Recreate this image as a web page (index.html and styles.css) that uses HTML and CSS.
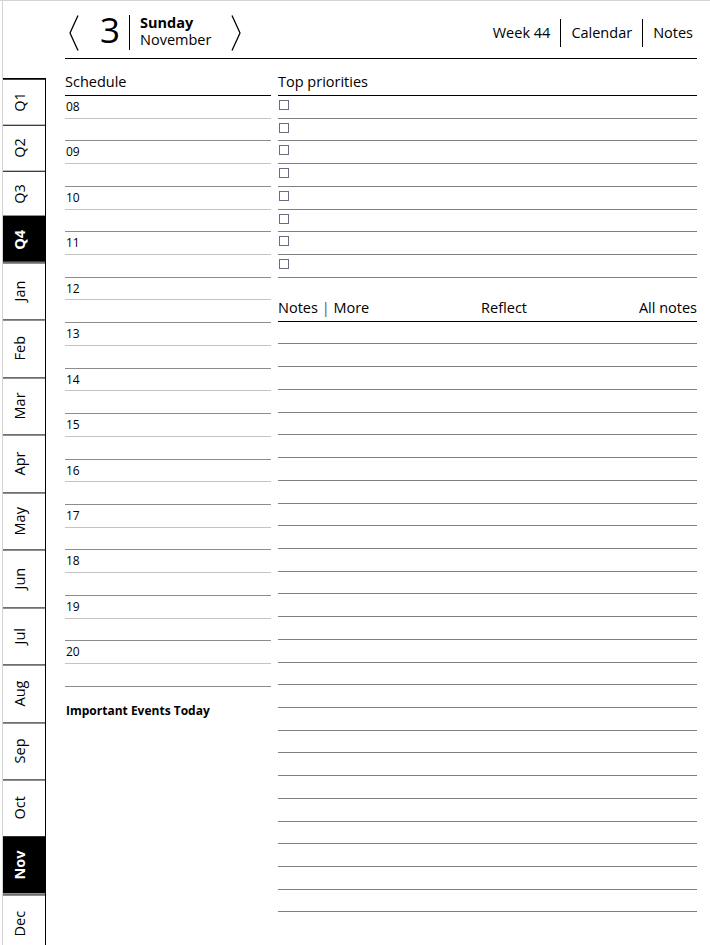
FILE: index.html
```html
<!DOCTYPE html>
<html lang="en">
<head>
<meta charset="utf-8">
<title>Daily planner</title>
<link rel="stylesheet" href="styles.css">
</head>
<body>
<div class="page">
  <nav class="tabs">
    <div class="tab q">Q1</div>
    <div class="tab q">Q2</div>
    <div class="tab q">Q3</div>
    <div class="tab q active">Q4</div>
    <div class="tab m">Jan</div>
    <div class="tab m">Feb</div>
    <div class="tab m">Mar</div>
    <div class="tab m">Apr</div>
    <div class="tab m">May</div>
    <div class="tab m">Jun</div>
    <div class="tab m">Jul</div>
    <div class="tab m">Aug</div>
    <div class="tab m">Sep</div>
    <div class="tab m">Oct</div>
    <div class="tab m active">Nov</div>
    <div class="tab m">Dec</div>
  </nav>
  <main class="main">
    <header class="header">
      <div class="date">
        <svg class="chev" width="10" height="36" viewBox="0 0 10 36"><polyline points="9,0.5 1,18 9,35.5" fill="none" stroke="#000" stroke-width="1.3"/></svg>
        <span class="daynum">3</span>
        <div class="dayname"><b>Sunday</b><span>November</span></div>
        <svg class="chev chev-next" width="10" height="36" viewBox="0 0 10 36"><polyline points="1,0.5 9,18 1,35.5" fill="none" stroke="#000" stroke-width="1.3"/></svg>
      </div>
      <div class="links">
        <span class="link first">Week 44</span>
        <span class="link">Calendar</span>
        <span class="link">Notes</span>
      </div>
    </header>
    <div class="cols">
      <section class="schedule">
        <div class="colhead">Schedule</div>
        <div class="slots">
          <div class="slot hour">08</div><div class="slot half"></div>
          <div class="slot hour">09</div><div class="slot half"></div>
          <div class="slot hour">10</div><div class="slot half"></div>
          <div class="slot hour">11</div><div class="slot half"></div>
          <div class="slot hour">12</div><div class="slot half"></div>
          <div class="slot hour">13</div><div class="slot half"></div>
          <div class="slot hour">14</div><div class="slot half"></div>
          <div class="slot hour">15</div><div class="slot half"></div>
          <div class="slot hour">16</div><div class="slot half"></div>
          <div class="slot hour">17</div><div class="slot half"></div>
          <div class="slot hour">18</div><div class="slot half"></div>
          <div class="slot hour">19</div><div class="slot half"></div>
          <div class="slot hour">20</div><div class="slot half"></div>
        </div>
        <div class="events">Important Events Today</div>
      </section>
      <section class="right">
        <div class="colhead">Top priorities</div>
        <div class="prios">
          <div class="prio"><span class="box"></span></div>
          <div class="prio"><span class="box"></span></div>
          <div class="prio"><span class="box"></span></div>
          <div class="prio"><span class="box"></span></div>
          <div class="prio"><span class="box"></span></div>
          <div class="prio"><span class="box"></span></div>
          <div class="prio"><span class="box"></span></div>
          <div class="prio"><span class="box"></span></div>
        </div>
        <div class="noteshead">
          <span>Notes <span class="pipe">|</span> More</span>
          <span>Reflect</span>
          <span>All notes</span>
        </div>
        <div class="notes">
          <div class="nline"></div><div class="nline"></div><div class="nline"></div><div class="nline"></div>
          <div class="nline"></div><div class="nline"></div><div class="nline"></div><div class="nline"></div>
          <div class="nline"></div><div class="nline"></div><div class="nline"></div><div class="nline"></div>
          <div class="nline"></div><div class="nline"></div><div class="nline"></div><div class="nline"></div>
          <div class="nline"></div><div class="nline"></div><div class="nline"></div><div class="nline"></div>
          <div class="nline"></div><div class="nline"></div><div class="nline"></div><div class="nline"></div>
          <div class="nline"></div><div class="nline"></div>
        </div>
      </section>
    </div>
  </main>
</div>
</body>
</html>
```

FILE: styles.css
```css
html, body {
  margin: 0;
  padding: 0;
  background: #fff;
}
body {
  border-top: 1px solid #d4d4d4;
  font-family: "Open Sans", "Noto Sans", sans-serif;
  color: #000;
  height: 944px;
  overflow: hidden;
}
.page {
  display: flex;
  margin-left: 2px;
  border-left: 1px solid #d4d4d4;
  height: 944px;
}
.tabs {
  width: 42px;
  flex: none;
  margin-top: 77px;
  border-top: 1px solid #000;
  border-right: 1px solid #000;
  display: flex;
  flex-direction: column;
  align-self: flex-start;
}
.tab {
  box-sizing: border-box;
  border-bottom: 1px solid #000;
  display: flex;
  align-items: center;
  justify-content: center;
  font-size: 14.5px;
  writing-mode: vertical-rl;
  transform: rotate(180deg);
  padding-left: 9px;
}
.tab.q { height: 45.75px; }
.tab.m { height: 57.45px; }
.tab.active {
  background: #000;
  color: #fff;
  font-weight: 700;
}
.main {
  margin-left: 19px;
  width: 632px;
  flex: none;
}
.header {
  box-sizing: border-box;
  height: 58px;
  padding-top: 6px;
  border-bottom: 1px solid #000;
  display: flex;
  align-items: center;
  justify-content: space-between;
}
.date {
  display: flex;
  align-items: center;
  padding-left: 4px;
}
.chev { display: block; }
.daynum {
  font-size: 35px;
  line-height: 35px;
  margin-left: 21px;
  margin-bottom: 6px;
}
.dayname {
  display: flex;
  flex-direction: column;
  margin-left: 9px;
  padding-left: 10px;
  border-left: 1px solid #000;
  height: 35px;
  justify-content: center;
  font-size: 14.5px;
  line-height: 17px;
  padding-bottom: 3px;
  box-sizing: border-box;
}
.dayname b { font-weight: 700; }
.chev-next { margin-left: 20px; }
.links {
  display: flex;
  align-items: center;
  padding-right: 4px;
  font-size: 14.5px;
}
.link {
  height: 28px;
  display: flex;
  align-items: center;
  padding: 0 0 0 10px;
  margin-left: 10px;
  border-left: 1px solid #000;
}
.link.first {
  border-left: none;
  padding-left: 0;
  margin-left: 0;
}
.cols {
  display: flex;
  gap: 7px;
}
.schedule { width: 206px; flex: none; }
.right { flex: 1; }
.colhead {
  box-sizing: border-box;
  height: 37px;
  border-bottom: 1px solid #000;
  display: flex;
  align-items: flex-end;
  padding-bottom: 4px;
  font-size: 14.5px;
}
.slot {
  box-sizing: border-box;
  height: 22.73px;
  font-size: 12px;
  line-height: 16px;
  padding: 3px 0 0 1px;
}
.slot.hour { border-bottom: 1px solid #c4c4c4; }
.slot.half { border-bottom: 1px solid #8c8c8c; }
.events {
  margin-top: 15px;
  padding-left: 1px;
  font-size: 12px;
  font-weight: 700;
}
.prio {
  box-sizing: border-box;
  height: 22.73px;
  border-bottom: 1px solid #808080;
  padding: 4px 0 0 1px;
}
.box {
  display: block;
  box-sizing: border-box;
  width: 10px;
  height: 10px;
  border: 1px solid #6c6c80;
}
.noteshead {
  box-sizing: border-box;
  height: 44px;
  border-bottom: 1px solid #000;
  display: flex;
  justify-content: space-between;
  align-items: flex-end;
  padding-bottom: 4px;
  font-size: 14.5px;
}
.pipe { color: #555; }
.nline {
  box-sizing: border-box;
  height: 22.73px;
  border-bottom: 1px solid #808080;
}
```
